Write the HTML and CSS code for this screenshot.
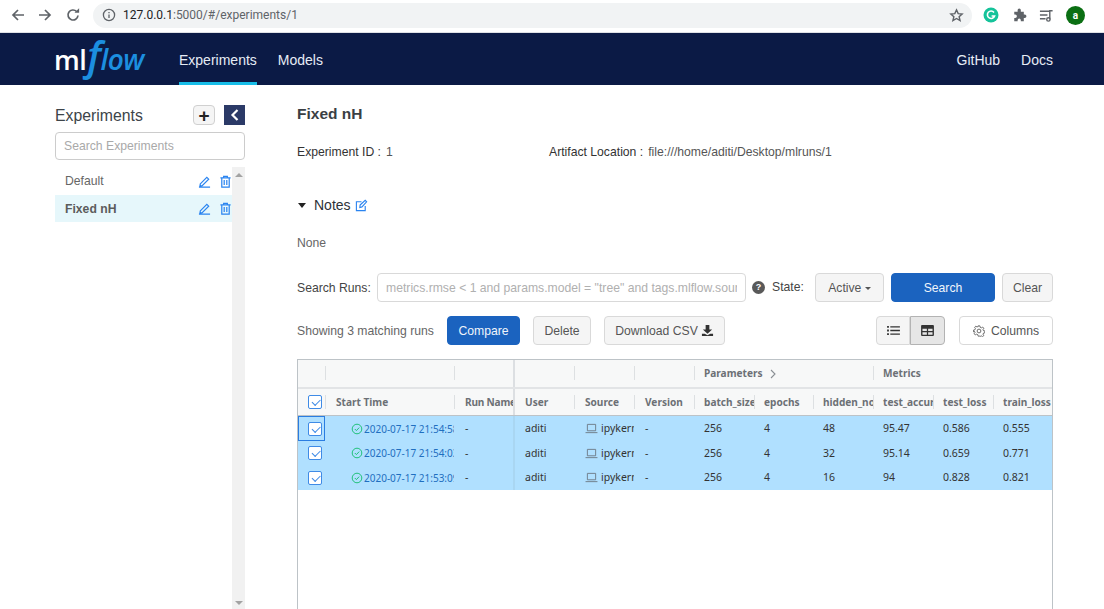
FILE: index.html
```html
<!DOCTYPE html>
<html lang="en">
<head>
<meta charset="utf-8">
<title>MLflow</title>
<link rel="stylesheet" href="styles.css">
</head>
<body>
<header class="chrome">
  <svg class="ci back" viewBox="0 0 16 16"><path d="M14 8H3M8 3 3 8l5 5"/></svg>
  <svg class="ci fwd" viewBox="0 0 16 16"><path d="M2 8h11M8 3l5 5-5 5"/></svg>
  <svg class="ci reload" viewBox="0 0 16 16"><path d="M13 8.500A5 5 0 1 1 11.600 4.500"/><path class="fill" d="M9.500 5.800h4.600V1.200z"/></svg>
  <div class="omnibox">
    <svg class="info" viewBox="0 0 14 14"><circle cx="7" cy="7" r="5.600"/><path d="M7 6.400v3.600M7 4v1.200"/></svg>
    <span class="url"><b>127.0.0.1</b>:5000/#/experiments/1</span>
    <svg class="star" viewBox="0 0 16 16"><path d="M8 2l1.800 4 4.200.400-3.200 2.800 1 4.200L8 11.200 4.200 13.400l1-4.200L2 6.400 6.200 6z"/></svg>
  </div>
  <div class="ext">
    <svg class="grammarly" viewBox="0 0 16 16"><circle cx="8" cy="8" r="7.500"/><path d="M11 5.400A3.700 3.700 0 1 0 11.600 9H8.600"/></svg>
    <svg class="puzzle" viewBox="0 0 16 16"><path d="M6 2.200a1.700 1.700 0 0 1 3.400 0V4h3.200v3h1a1.800 1.800 0 0 1 0 3.600h-1V14H9.400v-1a1.700 1.700 0 0 0-3.400 0v1H2.400v-3.400h1a1.800 1.800 0 0 0 0-3.600h-1V4H6z"/></svg>
    <svg class="media" viewBox="0 0 16 16"><path d="M1 3.500h10M1 7.500h8M1 11.500h6M11.500 12V3h3"/><circle cx="10" cy="12.200" r="1.800"/></svg>
    <span class="avatar">a</span>
  </div>
</header>

<nav class="topnav">
  <div class="logo"><span class="ml">ml</span><span class="flow"><span class="flow-f">f</span>low</span></div>
  <a class="tab active">Experiments</a>
  <a class="tab">Models</a>
  <span class="spacer"></span>
  <a class="tab">GitHub</a>
  <a class="tab">Docs</a>
</nav>

<div class="page">
  <aside class="sidebar">
    <div class="side-head">
      <span class="side-title">Experiments</span>
      <button class="plus">+</button>
      <button class="collapse"><svg viewBox="0 0 10 14"><path d="M7.500 2 2.500 7l5 5"/></svg></button>
    </div>
    <input class="side-search" placeholder="Search Experiments">
    <div class="exp-wrap">
      <ul class="exp-list">
        <li class="exp"><span class="exp-name">Default</span>
          <svg class="ic" viewBox="0 0 14 14"><path d="M2.500 9.500 9.500 2.500l2 2-7 7-2.400.400zM1 13h12"/></svg>
          <svg class="ic" viewBox="0 0 14 14"><path d="M1.500 3.200h11M5 3V1.400h4V3M3 3.200V13h8V3.200M5.600 5.500v5.200M8.400 5.500v5.200"/></svg>
        </li>
        <li class="exp selected"><span class="exp-name">Fixed nH</span>
          <svg class="ic" viewBox="0 0 14 14"><path d="M2.500 9.500 9.500 2.500l2 2-7 7-2.400.400zM1 13h12"/></svg>
          <svg class="ic" viewBox="0 0 14 14"><path d="M1.500 3.200h11M5 3V1.400h4V3M3 3.200V13h8V3.200M5.600 5.500v5.200M8.400 5.500v5.200"/></svg>
        </li>
      </ul>
      <div class="scrollbar"><i class="up"></i><i class="down"></i></div>
    </div>
  </aside>

  <main class="main">
    <h1 class="title">Fixed nH</h1>
    <div class="meta">
      <span class="meta-id"><b>Experiment ID :</b>1</span>
      <span><b>Artifact Location :</b>file:///home/aditi/Desktop/mlruns/1</span>
    </div>
    <div class="notes">
      <i class="caret-big"></i><span>Notes</span>
      <svg class="note-edit" viewBox="0 0 14 14"><path d="M11 7.500V12.500H1.500V3H7M5.500 6.500 11 1.500l1.500 1.500-5 5.500-2.300.600z"/></svg>
    </div>
    <p class="none">None</p>

    <div class="search-row">
      <label class="lbl run-lbl">Search Runs:</label>
      <input class="run-search" placeholder="metrics.rmse &lt; 1 and params.model = &quot;tree&quot; and tags.mlflow.source">
      <span class="help">?</span>
      <label class="lbl state">State:</label>
      <button class="btn active-btn">Active <i class="caret"></i></button>
      <button class="btn primary search-btn">Search</button>
      <button class="btn clear">Clear</button>
    </div>

    <div class="action-row">
      <span class="count">Showing 3 matching runs</span>
      <button class="btn primary compare">Compare</button>
      <button class="btn delete">Delete</button>
      <button class="btn csv">Download CSV
        <svg class="dl" viewBox="0 0 14 14"><path d="M5 1h4v5h3L7 10.500 2 6h3zM1 10.500h3L7 12l3-1.500h3V13H1z"/></svg>
      </button>
      <span class="spacer"></span>
      <div class="toggle">
        <button class="tg"><svg viewBox="0 0 14 12"><path d="M0 1h2v2H0zM0 5h2v2H0zM0 9h2v2H0zM3.500 1.300H14v1.400H3.500zM3.500 5.300H14v1.400H3.500zM3.500 9.300H14v1.400H3.500z"/></svg></button>
        <button class="tg on"><svg viewBox="0 0 14 12"><path fill-rule="evenodd" d="M1 0h12a1 1 0 0 1 1 1v10a1 1 0 0 1-1 1H1a1 1 0 0 1-1-1V1a1 1 0 0 1 1-1zM1.500 4v2.500h4.800V4zm6.200 0v2.500h4.800V4zM1.500 8v2.500h4.800V8zm6.200 0v2.500h4.800V8z"/></svg></button>
      </div>
      <button class="btn columns">
        <svg class="gear" viewBox="0 0 14 14"><path d="M6 1h2l.400 1.700 1.400.600 1.500-.900 1.300 1.400-.900 1.500.600 1.400 1.700.300v2l-1.700.400-.600 1.400.900 1.500-1.400 1.300-1.500-.900-1.400.600L8 13H6l-.400-1.700-1.400-.600-1.500.900-1.300-1.400.900-1.500-.600-1.400L.500 8V6l1.700-.400.600-1.400-.900-1.500 1.300-1.300 1.500.900 1.400-.600z"/><circle cx="7" cy="7" r="2.200"/></svg>
        Columns
      </button>
    </div>

    <section class="grid">
      <div class="row group">
        <div class="c"></div><div class="c sep"></div><div class="c sep pin"></div>
        <div class="c"></div><div class="c sep"></div><div class="c sep"></div>
        <div class="c sep span3">Parameters <svg class="chev" viewBox="0 0 8 10"><path d="M2 1l4 4-4 4"/></svg></div>
        <div class="c sep span3">Metrics</div>
      </div>
      <div class="row head">
        <div class="c chk"><span class="box"></span></div>
        <div class="c sep nudge">Start Time</div>
        <div class="c sep pin nudge run-name">Run Name</div>
        <div class="c">User</div><div class="c sep nudge">Source</div><div class="c sep nudge">Version</div>
        <div class="c sep">batch_size</div><div class="c sep">epochs</div><div class="c sep">hidden_nodes</div>
        <div class="c sep">test_accuracy</div><div class="c sep">test_loss</div><div class="c sep">train_loss</div>
      </div>
      <div class="row body r1">
        <div class="c chk focus"><span class="box"></span></div>
        <div class="c time"><svg class="ok" viewBox="0 0 12 12"><circle cx="6" cy="6" r="4.800"/><path d="M3.800 6l1.600 1.600 2.800-3"/></svg><span class="link">2020-07-17 21:54:58</span></div>
        <div class="c pin nudge">-</div>
        <div class="c">aditi</div>
        <div class="c nudge"><svg class="pc" viewBox="0 0 14 12"><path d="M2.500 1.500h9v7h-9zM.500 10.500h13"/></svg>ipykernel_launcher.py</div>
        <div class="c nudge">-</div><div class="c">256</div><div class="c">4</div><div class="c">48</div><div class="c">95.47</div><div class="c">0.586</div><div class="c">0.555</div>
      </div>
      <div class="row body r2">
        <div class="c chk"><span class="box"></span></div>
        <div class="c time"><svg class="ok" viewBox="0 0 12 12"><circle cx="6" cy="6" r="4.800"/><path d="M3.800 6l1.600 1.600 2.800-3"/></svg><span class="link">2020-07-17 21:54:03</span></div>
        <div class="c pin nudge">-</div>
        <div class="c">aditi</div>
        <div class="c nudge"><svg class="pc" viewBox="0 0 14 12"><path d="M2.500 1.500h9v7h-9zM.500 10.500h13"/></svg>ipykernel_launcher.py</div>
        <div class="c nudge">-</div><div class="c">256</div><div class="c">4</div><div class="c">32</div><div class="c">95.14</div><div class="c">0.659</div><div class="c">0.771</div>
      </div>
      <div class="row body r3">
        <div class="c chk"><span class="box"></span></div>
        <div class="c time"><svg class="ok" viewBox="0 0 12 12"><circle cx="6" cy="6" r="4.800"/><path d="M3.800 6l1.600 1.600 2.800-3"/></svg><span class="link">2020-07-17 21:53:09</span></div>
        <div class="c pin nudge">-</div>
        <div class="c">aditi</div>
        <div class="c nudge"><svg class="pc" viewBox="0 0 14 12"><path d="M2.500 1.500h9v7h-9zM.500 10.500h13"/></svg>ipykernel_launcher.py</div>
        <div class="c nudge">-</div><div class="c">256</div><div class="c">4</div><div class="c">16</div><div class="c">94</div><div class="c">0.828</div><div class="c">0.821</div>
      </div>
    </section>
  </main>
</div>
</body>
</html>
```
FILE: styles.css
```css
* { box-sizing: border-box; }
html, body { margin: 0; height: 609px; overflow: hidden; }
body { font-family: "Liberation Sans", Arial, sans-serif; font-size: 12.200px; color: #5f6368; background: #fff; display: flex; flex-direction: column; }
button, input { font-family: inherit; }
.spacer { flex: 1; }

/* browser chrome */
.chrome { height: 33px; flex: none; display: flex; align-items: center; padding: 0 0 2px 10px; border-bottom: 1px solid #dfe1e5; background: #fff; }
.ci { width: 16px; height: 16px; fill: none; stroke: #5f6368; stroke-width: 1.700; flex: none; }
.ci .fill { fill: #5f6368; stroke: none; }
.fwd { margin-left: 11px; }
.reload { margin-left: 12px; }
.omnibox { width: 879px; height: 25px; margin-left: 12px; border-radius: 13px; background: #f1f3f4; display: flex; align-items: center; padding: 0 8px 0 9px; flex: none; }
.info { width: 14px; height: 14px; fill: none; stroke: #5f6368; stroke-width: 1.300; flex: none; }
.url { margin-left: 7px; font: 12px/1 Roboto, sans-serif; color: #5f6368; flex: 1; }
.url b { font-weight: 400; color: #202124; }
.star { width: 15px; height: 15px; fill: none; stroke: #5f6368; stroke-width: 1.500; }
.ext { display: flex; align-items: center; margin-left: 11px; }
.grammarly { width: 16px; height: 16px; fill: none; }
.grammarly circle { fill: #15c39a; }
.grammarly path { stroke: #fff; stroke-width: 1.600; fill: none; }
.puzzle { width: 15px; height: 15px; fill: #5f6368; margin-left: 13px; }
.media { width: 15px; height: 15px; fill: none; stroke: #5f6368; stroke-width: 1.500; margin-left: 12px; }
.avatar { width: 19px; height: 19px; border-radius: 50%; background: #0b6f13; color: #fff; font: 700 10px/19px Roboto, sans-serif; text-align: center; margin-left: 12px; }

/* top nav */
.topnav { height: 52px; flex: none; background: #0b1a45; display: flex; align-items: stretch; padding: 0 51px 0 54px; }
.logo { width: 125px; display: flex; align-items: center; line-height: 1; }
.ml { font: 600 27px/1 "Open Sans", sans-serif; color: #fff; letter-spacing: -.5px; margin-top: 1px; }
.flow { font: italic 600 28px/1 "Open Sans", sans-serif; color: #1c8fe0; letter-spacing: -.5px; margin-left: 1px; }
.flow-f { font-size: 40px; line-height: 20px; }
.tab { color: #e6ecf5; font-size: 14px; line-height: 54px; margin-right: 21px; height: 52px; }
.tab:last-child { margin-right: 0; }
.tab.active { border-bottom: 3px solid #17bde8; }

/* page */
.page { flex: 1; display: flex; min-height: 0; padding-left: 55px; }
.sidebar { width: 190px; flex: none; display: flex; flex-direction: column; }
.side-head { display: flex; align-items: center; height: 47px; padding-top: 13px; }
.side-title { font-size: 15.800px; color: #3d4449; flex: 1; padding-top: 1px; }
.plus { width: 22px; height: 20px; padding: 0; border: 1px solid #d0d0d0; border-radius: 4px; background: #f5f5f5; color: #222; font: 700 19px/17px "Liberation Sans", sans-serif; }
.collapse { width: 21px; height: 20px; margin-left: 9px; padding: 0; border: 0; background: #2b3a67; display: flex; align-items: center; justify-content: center; }
.collapse svg { width: 10px; height: 14px; fill: none; stroke: #fff; stroke-width: 2.200; }
.side-search { height: 28px; border: 1px solid #ccc; border-radius: 4px; padding: 0 8px; font-size: 12.200px; outline: 0; width: 100%; }
.side-search::placeholder { color: #a9a9a9; opacity: 1; }
.exp-wrap { flex: 1; display: flex; margin-top: 7px; min-height: 0; }
.exp-list { list-style: none; margin: 0; padding: 0; width: 177px; }
.exp { height: 28px; display: flex; align-items: center; padding: 0 0 0 10px; color: #666; font-size: 12.200px; }
.exp.selected { background: #e6f7fb; font-weight: 700; height: 27px; color: #5c5c5c; }
.exp-name { flex: 1; }
.ic { width: 13px; height: 13px; fill: none; stroke: #2a84f0; stroke-width: 1.300; margin-right: 8px; flex: none; }
.ic + .ic { margin-right: 0; }
.scrollbar { width: 13px; background: #f1f1f1; position: relative; }
.scrollbar i { position: absolute; left: 3px; width: 0; height: 0; border-left: 4px solid transparent; border-right: 4px solid transparent; }
.up { top: 6px; border-bottom: 4px solid #a3a3a3; }
.down { bottom: 4px; border-top: 4px solid #a3a3a3; }

/* main */
.main { width: 756px; margin-left: 52px; flex: none; min-height: 0; overflow: hidden; }
.title { font-size: 15.500px; font-weight: 700; color: #3a3f44; margin: 20px 0 0; line-height: 18px; }
.meta { display: flex; margin-top: 21px; line-height: 16px; color: #555; }
.meta b { font-weight: 400; color: #333; margin-right: 5px; }
.meta-id { width: 252px; }
.notes { display: flex; align-items: center; margin-top: 35px; height: 20px; font-size: 14px; color: #2d3238; }
.caret-big { width: 0; height: 0; border-left: 4px solid transparent; border-right: 4px solid transparent; border-top: 5px solid #222; margin: 0 8px 0 1px; }
.note-edit { width: 13px; height: 13px; margin-left: 4px; fill: none; stroke: #2a84f0; stroke-width: 1.200; }
.none { margin: 20px 0 0; line-height: 16px; color: #666; }
.search-row { display: flex; align-items: center; margin-top: 22px; height: 29px; }
.lbl { color: #444; white-space: nowrap; }
.run-lbl { width: 74px; flex: none; }
.run-search { width: 369px; height: 29px; margin-left: 6px; border: 1px solid #d9d9d9; border-radius: 4px; padding: 0 8px; font-size: 12.200px; outline: 0; flex: none; }
.run-search::placeholder { color: #b0b0b0; opacity: 1; }
.help { width: 13px; height: 13px; margin-left: 6px; border-radius: 50%; background: #595959; color: #fff; font: 700 9px/13px "Liberation Sans", sans-serif; text-align: center; flex: none; }
.state { margin-left: 7px; padding-bottom: 2px; }
.btn { height: 29px; border: 1px solid #d9d9d9; border-radius: 4px; background: #f5f5f5; color: #555; font-size: 12.200px; padding: 0; white-space: nowrap; }
.active-btn { width: 69px; margin-left: auto; }
.caret { display: inline-block; width: 0; height: 0; border-left: 3px solid transparent; border-right: 3px solid transparent; border-top: 3px solid #555; vertical-align: 2px; }
.primary { background: #1b63bf; border-color: #1b63bf; color: #f0f5fb; }
.search-btn { width: 104px; margin-left: 7px; }
.clear { width: 51px; margin-left: 7px; }
.action-row { display: flex; align-items: center; margin-top: 14px; height: 29px; }
.count { color: #666; width: 150px; flex: none; }
.compare { width: 73px; }
.delete { width: 58px; margin-left: 13px; }
.csv { width: 121px; margin-left: 13px; display: flex; align-items: center; justify-content: center; gap: 3px; }
.dl { width: 13px; height: 13px; fill: #333; }
.toggle { display: flex; }
.tg { width: 34px; height: 29px; padding: 0; border: 1px solid #d9d9d9; background: #f5f5f5; display: flex; align-items: center; justify-content: center; border-radius: 4px 0 0 4px; }
.tg.on { background: #e6e6e6; border-color: #b3b3b3; border-radius: 0 4px 4px 0; width: 35px; }
.tg svg { width: 13px; height: 11px; fill: #333; }
.columns { width: 94px; margin-left: 14px; background: #fff; display: flex; align-items: center; justify-content: center; gap: 6px; }
.gear { width: 12px; height: 12px; fill: none; stroke: #555; stroke-width: 1; }

/* table */
.grid { margin-top: 14px; height: 260px; border: 1px solid #bdc3c7; border-bottom: 0; font: 10.500px/1 "Noto Sans", sans-serif; color: #333; overflow: hidden; }
.row { display: grid; grid-template-columns: 27px 129px 61px 59px 60px 60px 60px 59px 60px 60px 60px 60px; }
.c { overflow: hidden; white-space: nowrap; display: flex; align-items: center; padding-left: 10px; position: relative; }
.nudge { padding-left: 11px; }
.run-name { letter-spacing: -.2px; }
.group, .head { background: #f7f8f8; color: #6c7075; font-weight: 700; font-size: 10.100px; }
.group { height: 29px; border-bottom: 2px solid #e2e4e6; }
.head { height: 27px; border-bottom: 1px solid #bdc3c7; }
.sep::before { content: ""; position: absolute; left: 0; top: 6px; height: 14px; width: 1px; background: #dde0e2; }
.span3 { grid-column: span 3; }
.pin { border-right: 2px solid #dcdfe2; }
.chev { width: 8px; height: 10px; margin-left: 6px; fill: none; stroke: #8a8f94; stroke-width: 1.100; }
.body { background: #b0e0ff; }
.r1 { height: 25px; }
.r2 { height: 24px; }
.r3 { height: 25px; }
.body .pin { border-right-color: #a9d6f2; }
.chk, .body .chk { padding-left: 10px; }
.box { width: 14px; height: 14px; border: 1px solid #3f8be6; border-radius: 2px; background: #fff; position: relative; flex: none; }
.box::after { content: ""; position: absolute; left: 3px; top: 3px; width: 7px; height: 3.500px; border-left: 1px solid #3f8be6; border-bottom: 1px solid #3f8be6; transform: rotate(-45deg); }
.focus { outline: 1px solid #2a7de1; outline-offset: -1px; }
.time { padding-left: 26px; }
.ok { width: 12px; height: 12px; flex: none; margin-right: 1px; fill: none; stroke: #21c17a; stroke-width: 1; }
.link { color: #1f6fc0; font-size: 10px; }
.pc { width: 13px; height: 11px; flex: none; margin-right: 3px; fill: none; stroke: #6c7a85; stroke-width: 1; }
```
